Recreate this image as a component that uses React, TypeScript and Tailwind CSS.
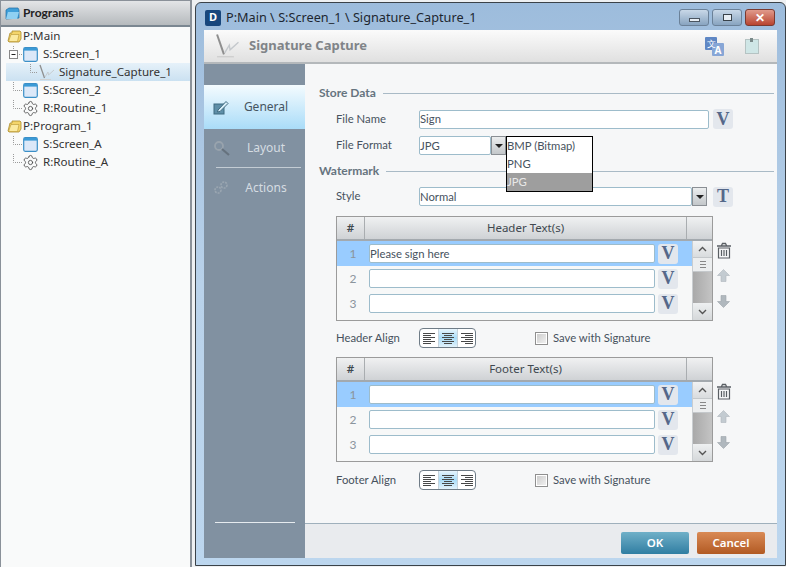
import type { ReactNode } from 'react';
import { Settings } from 'lucide-react';

function FolderIcon() {
  return (
    <svg width="15" height="14" viewBox="0 0 15 14" className="shrink-0">
      <path d="M1 12 L3 4 H5 V2 H13 L14 3 V10 L12 13 H2 Z" fill="#f4d56b" stroke="#a98a2c" strokeWidth="0.8" />
      <path d="M1.5 12.5 L4 5.5 H12 L10.5 12.5 Z" fill="#fbeaa0" stroke="#b8962f" strokeWidth="0.6" />
    </svg>
  );
}

function ScreenIcon() {
  return (
    <svg width="15" height="15" viewBox="0 0 15 15" className="shrink-0">
      <rect x="0.7" y="0.7" width="13.6" height="13.6" rx="1.5" fill="#dce8f8" stroke="#3b8fc7" strokeWidth="1.2" />
      <rect x="1" y="1" width="13" height="2.6" fill="#3b9ad6" />
    </svg>
  );
}

function PenIcon({ w = 17, h = 17 }: { w?: number; h?: number }) {
  return (
    <svg width={w} height={h} viewBox="0 0 17 17" className="shrink-0">
      <path d="M2 1 L6.5 14" stroke="#8f8f8f" strokeWidth="1.3" fill="none" />
      <path d="M7 13 L10 8 L10.5 11 L16 6" stroke="#c4c8cc" strokeWidth="0.9" fill="none" />
      <path d="M2 15.5 H13" stroke="#cfcfcf" strokeWidth="0.9" />
    </svg>
  );
}

function Connector({ width, up = 18, children }: { width: number; up?: number; children?: ReactNode }) {
  const x = width === 38 ? 30 : 13;
  return (
    <svg width={width} height="18" viewBox={`0 0 ${width} 18`} className="shrink-0">
      <path d={`M${x}.5 ${9 - up} V9.5 H${width}`} stroke="#9a9a9a" strokeWidth="1" strokeDasharray="1 1" fill="none" />
      {children}
    </svg>
  );
}

function Child({ icon, label, box }: { icon: ReactNode; label: string; box?: boolean }) {
  return (
    <div className="flex h-[18px] items-center">
      <Connector width={22}>
        {box && (
          <g>
            <rect x="9.5" y="5.5" width="8" height="8" fill="#fff" stroke="#888" />
            <path d="M11.5 9.5 H15.5" stroke="#222" />
          </g>
        )}
      </Connector>
      <div className="ml-[1px] flex w-[20px] shrink-0">{icon}</div>
      <span>{label}</span>
    </div>
  );
}

function Tree() {
  const gear = <Settings size={17} strokeWidth={1.2} className="-ml-[1px] text-[#4c4c4c]" />;
  return (
    <div className="flex w-[192px] shrink-0 flex-col border-x border-r-2 border-[#8a9199] bg-[#f9fafa] text-[11.6px] text-[#333]">
      <div className="flex h-[27px] shrink-0 items-center gap-[3px] border-t border-b-2 border-t-[#8a9199] border-b-[#7b8791] bg-gradient-to-b from-[#e3e5e7] to-[#b6babd] pl-[4px] font-['Lato',sans-serif] font-bold text-[#222]">
        <svg width="15" height="15" viewBox="0 0 15 15" className="shrink-0">
          <path d="M1 13 V4 L4 2 H13 L14 4 V12 Z" fill="#3f9fd9" stroke="#1f6fa3" strokeWidth="0.7" />
          <path d="M1 13 L3 6 H14 L12 13 Z" fill="#8fd0f2" />
        </svg>
        <span className="text-[12px]">Programs</span>
      </div>
      <div className="-ml-[1px] flex h-[18px] items-center gap-[1px] pl-[7px]">
        <FolderIcon />
        <span>P:Main</span>
      </div>
      <div className="-ml-[1px]">
        <Child icon={<ScreenIcon />} label="S:Screen_1" box />
      </div>
      <div className="ml-[5px] flex h-[18px] items-center bg-gradient-to-b from-[#e6f1f9] to-[#cbe1f1]">
        <div className="-ml-[6px] flex">
          <Connector width={38} />
        </div>
        <div className="flex w-[21px] shrink-0">
          <PenIcon />
        </div>
        <span>Signature_Capture_1</span>
      </div>
      <div className="-ml-[1px]">
        <Child icon={<ScreenIcon />} label="S:Screen_2" />
        <Child icon={gear} label="R:Routine_1" />
        <div className="flex h-[18px] items-center gap-[1px] pl-[7px]">
          <FolderIcon />
          <span>P:Program_1</span>
        </div>
        <Child icon={<ScreenIcon />} label="S:Screen_A" />
        <Child icon={gear} label="R:Routine_A" />
      </div>
    </div>
  );
}

function VButton({ letter = 'V' }: { letter?: string }) {
  return (
    <div className="flex h-[20px] w-[20px] shrink-0 items-center justify-center rounded-[3px] bg-[#e3e7ed] font-['Liberation_Serif',serif] text-[18px] font-bold text-[#55688a]">
      {letter}
    </div>
  );
}

function TextBox({ value = '', className }: { value?: string; className: string }) {
  return (
    <input
      readOnly
      value={value}
      className={`h-[19px] rounded-[2px] border border-[#9dbccb] bg-white pb-[1px] font-['Lato',sans-serif] text-[11.3px] text-[#47525e] outline-none ${className}`}
    />
  );
}

function ArrowBox() {
  return (
    <div className="flex h-[19px] w-[15px] shrink-0 items-center justify-center border border-[#8a8f94] bg-gradient-to-b from-[#eceeef] to-[#c3c7ca]">
      <div className="h-0 w-0 border-x-[4px] border-t-[4px] border-x-transparent border-t-[#222]" />
    </div>
  );
}

function SectionTitle({ title }: { title: string }) {
  return (
    <div className="flex h-[16px] items-center gap-[7px] pr-[3px] pl-[14px] text-[12px] font-bold text-[#66747f]">
      <span>{title}</span>
      <div className="h-px flex-1 bg-[#a9bac6]" />
    </div>
  );
}

function ScrollBar() {
  return (
    <div className="flex w-[20px] shrink-0 flex-col border-l border-[#c9cdd0] bg-[#dfe1e3]">
      <div className="flex h-[16px] items-center justify-center bg-gradient-to-b from-[#f1f2f3] to-[#d9dcde]">
        <svg width="9" height="6" viewBox="0 0 9 6">
          <path d="M1 5 L4.5 1.5 L8 5" stroke="#555" strokeWidth="1.4" fill="none" />
        </svg>
      </div>
      <div className="flex h-[15px] flex-col items-center justify-center gap-[2px] border-y border-[#c4c8cb] bg-[#eceeef]">
        <div className="h-px w-[6px] bg-[#888]" />
        <div className="h-px w-[6px] bg-[#888]" />
        <div className="h-px w-[6px] bg-[#888]" />
      </div>
      <div className="flex-1 bg-gradient-to-r from-[#a9a9a9] to-[#c4c4c4]" />
      <div className="flex h-[17px] items-center justify-center bg-gradient-to-b from-[#eef0f1] to-[#d5d8da]">
        <svg width="9" height="6" viewBox="0 0 9 6">
          <path d="M1 1 L4.5 4.5 L8 1" stroke="#555" strokeWidth="1.4" fill="none" />
        </svg>
      </div>
    </div>
  );
}

function TextRow({ n, value, active }: { n: number; value?: string; active?: boolean }) {
  return (
    <div className={`flex h-[25px] items-center ${active ? 'bg-[#99ccff]' : ''}`}>
      <div className="w-[32px] shrink-0 text-center text-[12px] text-[#8b959d]">{n}</div>
      <TextBox value={value} className="w-[286px]" />
      <div className="ml-[3px]">
        <VButton />
      </div>
    </div>
  );
}

function TextTable({ title, first }: { title: string; first?: string }) {
  return (
    <div className="ml-[31px] flex items-start">
      <div className="flex h-[105px] w-[377px] shrink-0 flex-col border border-[#9b9b9b] bg-[#f7f8f8]">
        <div className="flex h-[24px] shrink-0 border-b-2 border-[#a3a9ae] bg-gradient-to-b from-[#f0f1f2] to-[#cfd2d5] font-['Noto_Sans',sans-serif] text-[11.5px] text-[#40484f]">
          <div className="flex w-[28px] items-center justify-center border-r border-[#a9adb0] font-semibold">#</div>
          <div className="flex flex-1 items-center justify-center border-r border-[#a9adb0]">{title}</div>
          <div className="w-[25px]" />
        </div>
        <div className="flex flex-1">
          <div className="flex-1">
            <TextRow n={1} value={first} active />
            <TextRow n={2} />
            <TextRow n={3} />
          </div>
          <ScrollBar />
        </div>
      </div>
      <div className="ml-[2px] flex w-[17px] flex-col items-center pt-[26px]">
        <svg width="16" height="17" viewBox="0 0 16 17">
          <path d="M1 4 H15 M5.5 3.5 L6.5 1.5 H9.5 L10.5 3.5" stroke="#5a5f64" strokeWidth="1.3" fill="none" />
          <path d="M2.5 6 H13.5 V16 H2.5 Z M5.5 8 V14 M8 8 V14 M10.5 8 V14" stroke="#5a5f64" strokeWidth="1.2" fill="none" />
        </svg>
        <svg width="13" height="13" viewBox="0 0 13 13" className="mt-[10px]">
          <path d="M6.5 0.5 L12.5 6.5 H9 V12.5 H4 V6.5 H0.5 Z" fill="#c3cbd1" stroke="#aeb6bc" strokeWidth="0.6" />
        </svg>
        <svg width="13" height="13" viewBox="0 0 13 13" className="mt-[13px]">
          <path d="M6.5 12.5 L12.5 6.5 H9 V0.5 H4 V6.5 H0.5 Z" fill="#b0b8be" stroke="#9da5ab" strokeWidth="0.6" />
        </svg>
      </div>
    </div>
  );
}

function AlignIcon({ kind }: { kind: 'left' | 'center' | 'right' }) {
  const rows = [12, 8, 12, 8, 12, 8];
  return (
    <svg width="12" height="11" viewBox="0 0 12 11">
      {rows.map((w, i) => {
        const x = kind === 'left' ? 0 : kind === 'center' ? (12 - w) / 2 : 12 - w;
        return <rect key={i} x={x} y={i * 2} width={w} height="1" fill="#484848" />;
      })}
    </svg>
  );
}

function AlignRow({ label }: { label: string }) {
  return (
    <div className="ml-[31px] flex h-[20px] items-center">
      <span className="w-[83px] shrink-0">{label}</span>
      <div className="flex h-[20px] w-[57px] shrink-0 overflow-hidden rounded-[4px] border border-[#6f7c87] bg-white">
        <div className="flex w-[18px] items-center justify-center">
          <AlignIcon kind="left" />
        </div>
        <div className="flex w-[20px] items-center justify-center border-x border-[#c7d3dc] bg-gradient-to-b from-[#e7f4fc] via-[#a9dcf8] to-[#e2f2fb]">
          <AlignIcon kind="center" />
        </div>
        <div className="flex flex-1 items-center justify-center">
          <AlignIcon kind="right" />
        </div>
      </div>
      <div className="ml-[59px] h-[13px] w-[13px] shrink-0 border border-[#8f8f8f] bg-gradient-to-br from-[#c9c9c9] to-[#f4f4f4] shadow-[inset_0_0_0_1px_#fff]" />
      <span className="ml-[5px]">Save with Signature</span>
    </div>
  );
}

function SideItem({ label, icon, active, height }: { label: string; icon: ReactNode; active?: boolean; height: string }) {
  return (
    <div
      className={`flex items-center ${height} ${active ? 'bg-gradient-to-b from-[#f4fbfe] to-[#a9dcf8] text-[#46545f]' : 'text-[#d5dce2]'}`}
    >
      <div className="flex w-[39px] shrink-0 justify-center pr-[5px]">{icon}</div>
      <span className="w-[46px] text-center text-[12px]">{label}</span>
    </div>
  );
}

function WinButton({ className, children }: { className: string; children: ReactNode }) {
  return (
    <div className={`flex h-[17px] w-[30px] items-center justify-center rounded-[3px] border border-[#6b8198] ${className}`}>
      {children}
    </div>
  );
}

export default function App() {
  return (
    <div className="flex h-[567px] w-[786px] overflow-hidden bg-[#eef0f2] font-['Noto_Sans',sans-serif]">
      <Tree />
      <div className="ml-[3px] mt-[2px] flex h-[564px] flex-1 flex-col rounded-t-[6px] border border-[#3b4248] bg-gradient-to-b from-[#9dbcdc] via-[#b9d2ea] to-[#bcd6ee]">
        {/* Title bar */}
        <div className="flex h-[27px] shrink-0 items-center pt-[2px] pr-[10px] pl-[9px]">
          <div className="flex h-[16px] w-[16px] shrink-0 items-center justify-center rounded-[2px] bg-[#17467c] text-[11px] font-bold text-white">
            D
          </div>
          <span className="ml-[5px] text-[12.7px] text-[#1d2730]">P:Main \ S:Screen_1 \ Signature_Capture_1</span>
          <div className="ml-auto flex gap-[3px]">
            <WinButton className="bg-gradient-to-b from-[#c9d8e8] to-[#88a4c0]">
              <div className="mt-[4px] h-[4px] w-[11px] border border-[#4b5560] bg-[#e8eef4]" />
            </WinButton>
            <WinButton className="bg-gradient-to-b from-[#c9d8e8] to-[#88a4c0]">
              <div className="h-[7px] w-[9px] border border-[#39424a] bg-[#e8eef4]" />
            </WinButton>
            <WinButton className="border-[#7a3a30] bg-gradient-to-b from-[#e09a8c] to-[#b8432f]">
              <span className="text-[12px] font-bold leading-none text-white">✕</span>
            </WinButton>
          </div>
        </div>

        <div className="ml-[8px] mr-[8px] flex min-h-0 flex-1 flex-col">
          {/* Toolbar */}
          <div className="flex h-[34px] shrink-0 items-center border-b-2 border-[#b4b8bb] bg-gradient-to-b from-[#fbfbfb] to-[#e0e0e0] pl-[10px]">
            <PenIcon w={26} h={26} />
            <span className="ml-[9px] text-[13px] font-bold text-[#808488]">Signature Capture</span>
            <svg width="19" height="19" viewBox="0 0 19 19" className="ml-auto">
              <rect x="0" y="0" width="12" height="13" rx="1" fill="#5f87c4" />
              <rect x="7" y="6" width="12" height="13" rx="1" fill="#87a6d6" />
              <text x="6" y="10" fontSize="9" fill="#fff" textAnchor="middle">文</text>
              <text x="13" y="17" fontSize="10" fontWeight="bold" fill="#fff" textAnchor="middle">A</text>
            </svg>
            <svg width="14" height="16" viewBox="0 0 14 16" className="ml-[21px] mr-[18px]">
              <rect x="0.5" y="1.5" width="13" height="14" fill="#cfe6e6" stroke="#b5c3c3" />
              <rect x="5" y="0" width="3" height="4" fill="#7a8a8a" />
            </svg>
          </div>

          <div className="flex min-h-0 flex-1">
            {/* Sidebar */}
            <div className="flex w-[101px] shrink-0 flex-col bg-[#8191a1] pt-[21px]">
              <SideItem
                label="General"
                active
                height="h-[44px]"
                icon={
                  <svg width="16" height="15" viewBox="0 0 16 15">
                    <rect x="1" y="4" width="10" height="10" fill="#5f8fa8" stroke="#3f6a80" />
                    <path d="M5 10 L13 1.5 L15 3.5 L7 11.5 L4.5 12 Z" fill="#d8eef8" stroke="#3f6a80" />
                  </svg>
                }
              />
              <SideItem
                label="Layout"
                height="h-[38px]"
                icon={
                  <svg width="17" height="16" viewBox="0 0 17 16">
                    <circle cx="6" cy="6" r="4" fill="none" stroke="#98a3ad" strokeWidth="1.8" />
                    <path d="M9 9 L16 15" stroke="#66727e" strokeWidth="2.2" />
                  </svg>
                }
              />
              <div className="ml-[12px] mr-[4px] h-px shrink-0 bg-[#c3ccd4]" />
              <SideItem
                label="Actions"
                height="h-[39px]"
                icon={
                  <svg width="16" height="15" viewBox="0 0 16 15">
                    <circle cx="11" cy="5" r="3" fill="none" stroke="#9aa6b1" strokeWidth="1.6" strokeDasharray="2 1" />
                    <circle cx="5" cy="10" r="3" fill="none" stroke="#9aa6b1" strokeWidth="1.6" strokeDasharray="2 1" />
                  </svg>
                }
              />
              <div className="mb-[35px] ml-[11px] mr-[10px] mt-auto h-px bg-[#e6ebef]" />
            </div>

            {/* Form */}
            <div className="flex min-w-0 flex-1 flex-col bg-[#f6f7f8]">
              <div className="relative flex-1 font-['Lato',sans-serif] text-[11.3px] text-[#47525e]">
                <div className="h-[21px]" />
                <SectionTitle title="Store Data" />
                <div className="ml-[31px] mt-[8px] flex h-[20px] items-center">
                  <span className="w-[83px] shrink-0">File Name</span>
                  <TextBox value="Sign" className="w-[290px]" />
                  <div className="ml-[4px]">
                    <VButton />
                  </div>
                </div>
                <div className="ml-[31px] mt-[7px] flex h-[19px] items-center">
                  <span className="w-[83px] shrink-0">File Format</span>
                  <TextBox value="JPG" className="w-[72px]" />
                  <ArrowBox />
                </div>
                <div className="h-[8px]" />
                <SectionTitle title="Watermark" />
                <div className="ml-[31px] mt-[8px] flex h-[19px] items-center">
                  <span className="w-[83px] shrink-0">Style</span>
                  <TextBox value="Normal" className="w-[273px]" />
                  <ArrowBox />
                  <div className="ml-[6px]">
                    <VButton letter="T" />
                  </div>
                </div>
                <div className="h-[10px]" />
                <TextTable title="Header Text(s)" first="Please sign here" />
                <div className="h-[7px]" />
                <AlignRow label="Header Align" />
                <div className="h-[9px]" />
                <TextTable title="Footer Text(s)" />
                <div className="h-[8px]" />
                <AlignRow label="Footer Align" />

                {/* Open dropdown of File Format */}
                <div className="absolute left-[201px] top-[72px] flex h-[56px] w-[87px] flex-col border border-black bg-white leading-[18px]">
                  <div className="h-[18px]">BMP (Bitmap)</div>
                  <div className="h-[18px]">PNG</div>
                  <div className="h-[18px] bg-[#9e9e9e] text-[#e8e8e8]">JPG</div>
                </div>
              </div>

              {/* Footer */}
              <div className="flex h-[35px] shrink-0 items-start justify-end gap-[8px] border-t border-[#9fb0bc] bg-[#e9ebee] pt-[8px] pr-[12px]">
                <div className="flex h-[22px] w-[68px] items-center justify-center rounded-[2px] bg-gradient-to-b from-[#6fb0c8] to-[#2f7ea2] text-[11.5px] font-semibold text-white">
                  OK
                </div>
                <div className="flex h-[22px] w-[68px] items-center justify-center rounded-[2px] bg-gradient-to-b from-[#d98a55] to-[#b25a22] text-[11.5px] font-semibold text-white">
                  Cancel
                </div>
              </div>
            </div>
          </div>
        </div>
        <div className="h-[7px] shrink-0" />
      </div>
    </div>
  );
}
